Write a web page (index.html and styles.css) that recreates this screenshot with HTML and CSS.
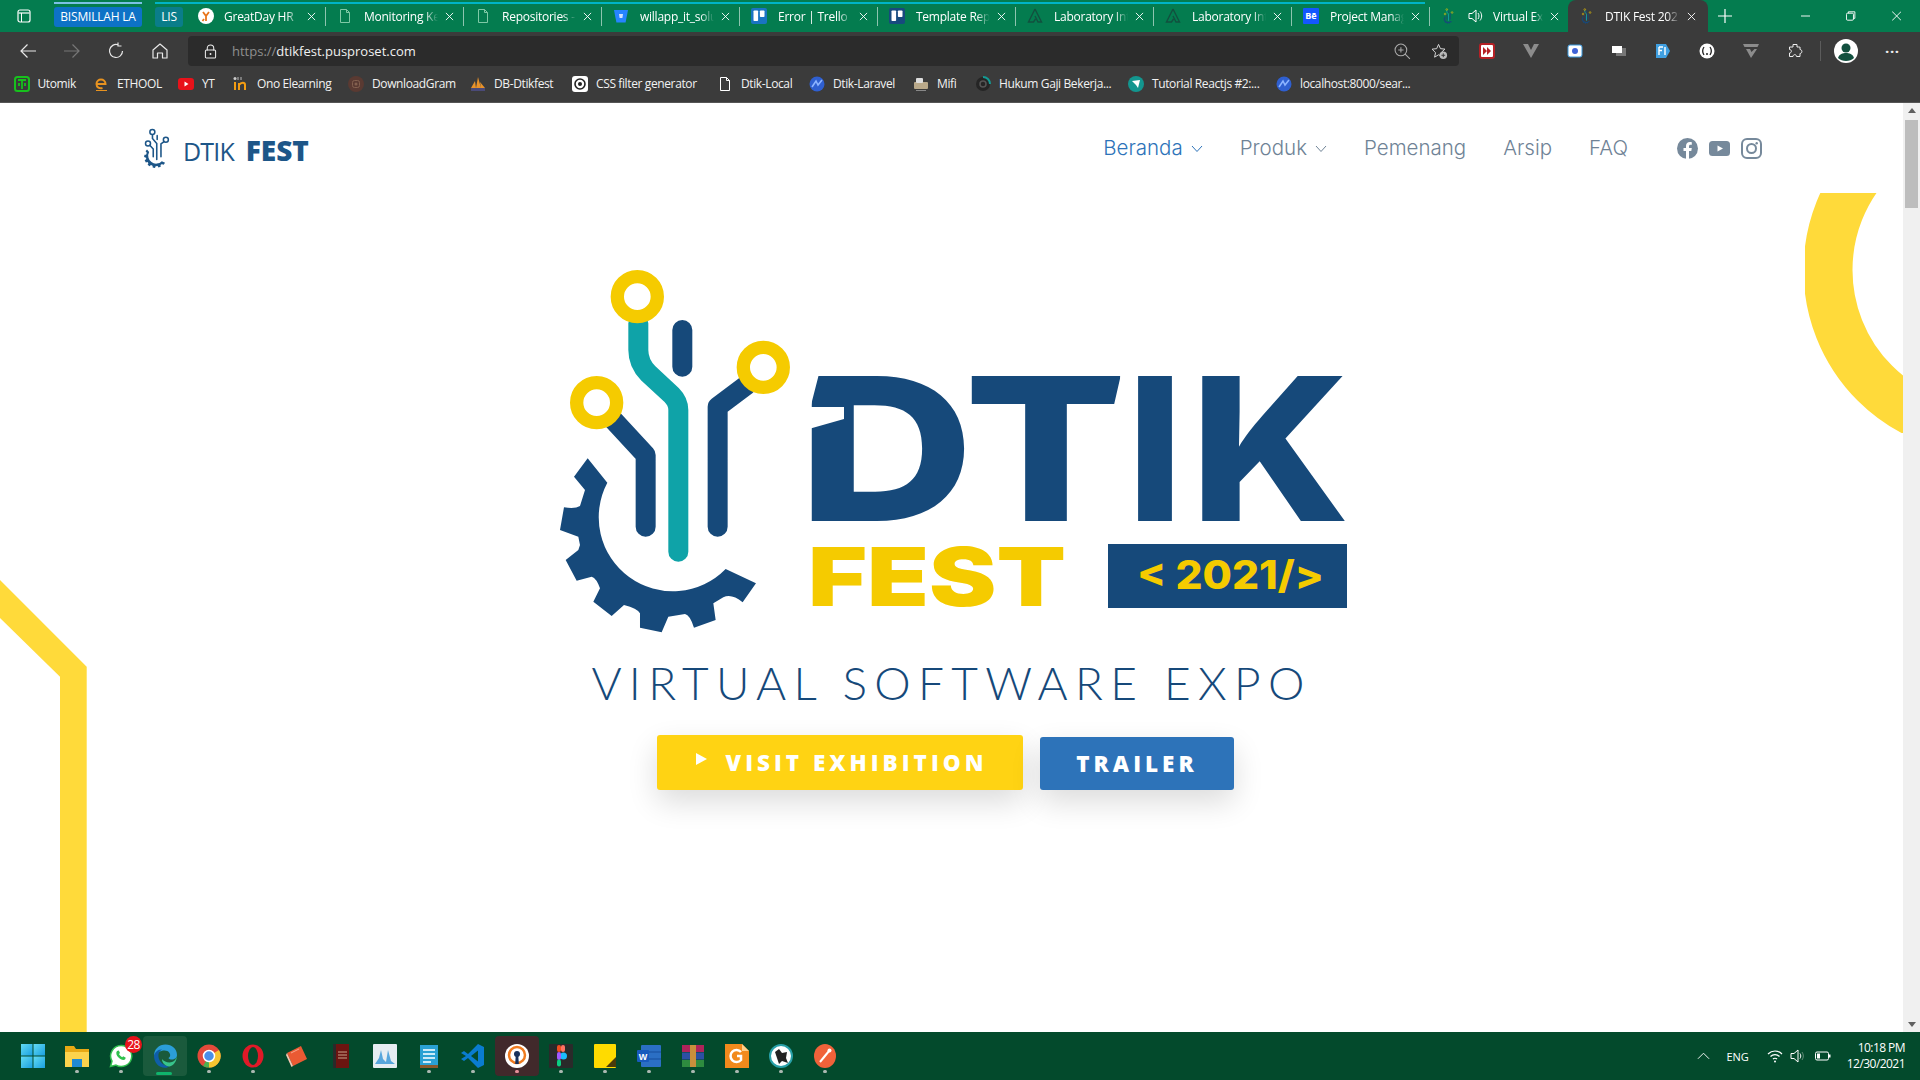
FILE: index.html
```html
<!DOCTYPE html>
<html lang="en">
<head>
<meta charset="utf-8">
<title>DTIK Fest 2021</title>
<link rel="stylesheet" href="styles.css">
</head>
<body>
<svg class="defs" aria-hidden="true">
  <defs>
    <path id="gear" d="M113 595L172 668A222 222 0 0 0 527 927L618 970L578 1027Q545 1000 520 1012L490 1030L497 1080L432 1103Q420 1065 405 1062L355 1070L335 1117L270 1103L270 1060Q262 1045 222 1035L185 1068L130 1025L150 985Q140 955 125 950L80 962L47 900L85 870L90 855L85 830L30 810L42 742Q75 748 90 738L105 690L72 650Z"/>
    <symbol id="doc" viewBox="0 0 16 16"><path d="M3.5 1.5h6l3 3v10h-9z M9.5 1.5v3h3" fill="none" stroke="currentColor" stroke-width="1"/></symbol>
    <symbol id="lab" viewBox="0 0 16 16"><path d="M8 1L14.5 14H11L8 8M8 1L1.5 14H6.5L8.5 11" fill="none" stroke="#12503f" stroke-width="1.4"/></symbol>
    <symbol id="trello" viewBox="0 0 16 16"><rect width="16" height="16" rx="2" fill="currentColor"/><rect x="2.5" y="2.5" width="4.6" height="10.5" rx=".8" fill="#fff"/><rect x="8.9" y="2.5" width="4.6" height="6.5" rx=".8" fill="#fff"/></symbol>
    <symbol id="close" viewBox="0 0 10 10"><path d="M1 1L9 9M9 1L1 9" stroke="currentColor" stroke-width="1" fill="none"/></symbol>
    <symbol id="blueball" viewBox="0 0 16 16"><circle cx="8" cy="8" r="7.5" fill="#2f5fd0"/><path d="M3 11L7 5L9 9L13 4" stroke="#8db4ff" stroke-width="1.6" fill="none"/></symbol>
    <symbol id="miniicon" viewBox="0 0 840 1140">
      <path d="M265 190V290L385 430V875" fill="none" stroke="#0fa3a8" stroke-width="60" stroke-linecap="round"/>
      <path d="M397 210V320M190 480L287 585V800M590 375L503 440V800" fill="none" stroke="#16497a" stroke-width="60" stroke-linecap="round"/>
      <circle cx="262" cy="110" r="60" fill="none" stroke="#f5cb00" stroke-width="40"/><circle cx="640" cy="322" r="60" fill="none" stroke="#f5cb00" stroke-width="40"/><circle cx="140" cy="428" r="60" fill="none" stroke="#f5cb00" stroke-width="40"/>
      <use href="#gear" fill="#16497a"/>
    </symbol>
  </defs>
</svg>

<header class="titlebar">
  <div class="winbtn"><svg class="ic14" viewBox="0 0 14 14"><rect x="1" y="1" width="12" height="12" rx="2" fill="none" stroke="#fff" stroke-width="1.2"/><path d="M1.5 4h11" stroke="#fff" stroke-width="1.2"/><path d="M4.5 4v9" stroke="#fff" stroke-width="1"/></svg></div>
  <div class="chip chip-blue">BISMILLAH LA</div>
  <div class="chip chip-teal">LIS</div>
  <div class="tabs">
    <div class="tab"><svg class="favicon" viewBox="0 0 16 16"><circle cx="8" cy="8" r="8" fill="#fff"/><path d="M5 4l3 4 3-4M8 8v5M6 11l-1.5 2" stroke="#e8741a" stroke-width="1.8" fill="none"/></svg><span class="tab-title">GreatDay HR</span><svg class="x"><use href="#close"/></svg></div>
    <div class="tab"><svg class="favicon doc-ic"><use href="#doc"/></svg><span class="tab-title">Monitoring Kehadiran</span><svg class="x"><use href="#close"/></svg></div>
    <div class="tab"><svg class="favicon doc-ic"><use href="#doc"/></svg><span class="tab-title">Repositories - Bitbucket</span><svg class="x"><use href="#close"/></svg></div>
    <div class="tab"><svg class="favicon" viewBox="0 0 16 16"><path d="M1 2h14l-2.4 12.5H3.4z" fill="#2684ff"/><path d="M6 6h4l-.6 4H6.6z" fill="#cfe2ff"/></svg><span class="tab-title">willapp_it_solution</span><svg class="x"><use href="#close"/></svg></div>
    <div class="tab"><svg class="favicon trello-a"><use href="#trello"/></svg><span class="tab-title">Error | Trello</span><svg class="x"><use href="#close"/></svg></div>
    <div class="tab"><svg class="favicon trello-b"><use href="#trello"/></svg><span class="tab-title">Template Repository</span><svg class="x"><use href="#close"/></svg></div>
    <div class="tab"><svg class="favicon"><use href="#lab"/></svg><span class="tab-title">Laboratory Integrated</span><svg class="x"><use href="#close"/></svg></div>
    <div class="tab"><svg class="favicon"><use href="#lab"/></svg><span class="tab-title">Laboratory Integrated</span><svg class="x"><use href="#close"/></svg></div>
    <div class="tab"><span class="be">Bē</span><span class="tab-title">Project Management</span><svg class="x"><use href="#close"/></svg></div>
    <div class="tab tab-audio"><svg class="favicon"><use href="#miniicon"/></svg><svg class="speaker" viewBox="0 0 16 16"><path d="M2 5.5h3L9 2v12L5 10.5H2z M11 5c1.300 1.800 1.300 4.200 0 6 M13 3.500c2.200 2.700 2.200 6.300 0 9" fill="none" stroke="#fff" stroke-width="1"/></svg><span class="tab-title">Virtual Expo</span><svg class="x"><use href="#close"/></svg></div>
    <div class="tab tab-active"><svg class="favicon"><use href="#miniicon"/></svg><span class="tab-title">DTIK Fest 2021</span><svg class="x"><use href="#close"/></svg></div>
  </div>
  <svg class="plus" viewBox="0 0 16 16"><path d="M8 1v14M1 8h14" stroke="#fff" stroke-width="1.200"/></svg>
  <div class="wincontrols">
    <svg class="ic10" viewBox="0 0 10 10"><path d="M0 5h10" stroke="#fff"/></svg>
    <svg class="ic10" viewBox="0 0 10 10"><rect x=".5" y="2" width="7.500" height="7.500" rx="1.200" fill="none" stroke="#fff"/><path d="M2.500 2V.5H9.500V7.500H8" fill="none" stroke="#fff"/></svg>
    <svg class="ic10" viewBox="0 0 10 10"><path d="M0 0L10 10M10 0L0 10" stroke="#fff"/></svg>
  </div>
  <span class="groupline groupline-blue"></span>
  <span class="groupline groupline-teal"></span>
</header>

<div class="toolbar">
  <div class="navbtns">
    <svg class="tb" viewBox="0 0 18 18"><path d="M17 9H2M8.500 2.500L2 9l6.500 6.500" fill="none" stroke="#e8e8e8" stroke-width="1.200"/></svg>
    <svg class="tb" viewBox="0 0 18 18"><path d="M1 9h15M9.500 2.500L16 9l-6.500 6.500" fill="none" stroke="#777" stroke-width="1.200"/></svg>
    <svg class="tb" viewBox="0 0 18 18"><path d="M15.500 9A6.500 6.500 0 1 1 11 2.800M11 .5V4H14.500" fill="none" stroke="#e8e8e8" stroke-width="1.200"/></svg>
    <svg class="tb" viewBox="0 0 18 18"><path d="M2 8L9 2l7 6v8h-4.500v-5h-5v5H2z" fill="none" stroke="#e8e8e8" stroke-width="1.200" stroke-linejoin="round"/></svg>
  </div>
  <div class="omnibox">
    <svg class="lock" viewBox="0 0 14 16"><path d="M3.500 7V4.500a3.500 3.500 0 0 1 7 0V7" fill="none" stroke="#eee" stroke-width="1.100"/><rect x="1.500" y="6.500" width="11" height="8.500" rx="1.200" fill="none" stroke="#eee" stroke-width="1.100"/><circle cx="7" cy="10.700" r="1" fill="#eee"/></svg>
    <span class="url"><span class="url-dim">https://</span>dtikfest.pusproset.com</span>
    <svg class="omni-ic zoomic" viewBox="0 0 16 16"><circle cx="6.500" cy="6.500" r="5.500" fill="none" stroke="#aaa"/><path d="M10.500 10.500L15 15M4 6.500h5M6.500 4v5" stroke="#aaa" fill="none"/></svg>
    <svg class="omni-ic" viewBox="0 0 18 18"><path d="M8 1.500l2 4.500 4.800.5-3.600 3.200 1 4.700L8 12.500 3.800 15l1-4.700L1.200 6.500 6 6z" fill="none" stroke="#ddd"/><circle cx="13" cy="13" r="4" fill="#bbb"/><path d="M11 13h4M13 11v4" stroke="#333"/></svg>
  </div>
  <div class="exts">
    <svg class="ext" viewBox="0 0 16 16"><rect x="1" y="1" width="14" height="14" rx="2" fill="#fff" stroke="#b52025" stroke-width="2"/><path d="M4 4l4 4-4 4zM8 4l4 4-4 4z" fill="#b52025"/></svg>
    <svg class="ext" viewBox="0 0 16 16"><path d="M0 1h5l3 6 3-6h5L8 15z" fill="#8c8c8c"/></svg>
    <svg class="ext" viewBox="0 0 16 16"><rect x="1" y="2" width="14" height="12" rx="2" fill="#fff" stroke="#3a9ae0"/><circle cx="8" cy="8" r="3" fill="#3f63d8"/></svg>
    <svg class="ext" viewBox="0 0 16 16"><rect x="5" y="5" width="10" height="8" fill="#777"/><rect x="1" y="3" width="10" height="7" fill="#fff"/></svg>
    <svg class="ext" viewBox="0 0 16 16"><path d="M1 1h10l4 7-4 7H1z" fill="#3f9fe0"/><path d="M4 4h4M4 4v8M4 7.500h3M10 4v8" stroke="#fff" stroke-width="1.400"/></svg>
    <svg class="ext" viewBox="0 0 16 16"><circle cx="8" cy="8" r="7.500" fill="#fff"/><path d="M5 4c-2 3-2 5 0 8M11 4c2 3 2 5 0 8" stroke="#222" stroke-width="1.300" fill="none"/><circle cx="8" cy="11" r="1" fill="#222"/></svg>
    <svg class="ext" viewBox="0 0 16 16"><path d="M0 1h16l-1.500 3H1.500zM3 6h4l1.500 3 3-3H14L8 15z" fill="#8c8c8c"/></svg>
    <svg class="ext" viewBox="0 0 16 16"><path d="M6 1.500h4v2.500c2 0 3 0 3 0v2.500c2.500 0 2.500 4 0 4v3H9.500c0-2.500-3.500-2.500-3.500 0H2.500v-3.500c2.500 0 2.500-3.500 0-3.500V4H6z" fill="none" stroke="#eee" stroke-linejoin="round"/></svg>
    <span class="tb-sep"></span>
    <svg class="avatar" viewBox="0 0 24 24"><circle cx="12" cy="12" r="12" fill="#fff"/><circle cx="12" cy="9" r="4.500" fill="#12503f"/><path d="M4 19c1-4 5-5 8-5s7 1 8 5c-4 4-12 4-16 0z" fill="#12503f"/></svg>
    <span class="dots">···</span>
  </div>
</div>

<nav class="bookmarks">
  <div class="bm"><svg class="bmi" viewBox="0 0 16 16"><rect x="1" y="1" width="14" height="14" rx="2.500" fill="none" stroke="#17c11d" stroke-width="2"/><path d="M4 4h8M8 4v9M5 7v3M11 7v3" stroke="#17c11d" stroke-width="1.800"/></svg>Utomik</div>
  <div class="bm"><svg class="bmi" viewBox="0 0 16 16"><path d="M3.500 8h9c0-6-9-6-9 0 0 3.500 3 5 6 4" fill="none" stroke="#e89320" stroke-width="2"/><path d="M3 14.500h11" stroke="#e89320"/></svg>ETHOOL</div>
  <div class="bm"><svg class="bmi" viewBox="0 0 16 16"><rect y="2" width="16" height="12" rx="3" fill="#e8121a"/><path d="M6.500 5.500l4 2.500-4 2.500z" fill="#fff"/></svg>YT</div>
  <div class="bm"><svg class="bmi" viewBox="0 0 16 16"><path d="M2 6v8M6 14V7M6 9c2-3 6-3 6 0v5" fill="none" stroke="#f39c12" stroke-width="2"/><circle cx="2" cy="2.500" r="1.500" fill="#ccc"/><path d="M5 1v3M8 1v3" stroke="#bbb"/></svg>Ono Elearning</div>
  <div class="bm"><svg class="bmi" viewBox="0 0 16 16"><circle cx="8" cy="8" r="8" fill="#5a3a32"/><rect x="4.500" y="4.500" width="7" height="7" rx="2" fill="none" stroke="#83604f"/><circle cx="8" cy="8" r="1.500" fill="#83604f"/></svg>DownloadGram</div>
  <div class="bm"><svg class="bmi" viewBox="0 0 16 16"><path d="M1 12L5 5l1 7zM6 12L8 1l3 11zM11 12l-1-6 5 6z" fill="#e8922a"/><path d="M1 12h14v3H1z" fill="#4a4a78"/></svg>DB-Dtikfest</div>
  <div class="bm"><svg class="bmi" viewBox="0 0 16 16"><rect width="16" height="16" rx="3" fill="#fff"/><circle cx="8" cy="8" r="5" fill="none" stroke="#222" stroke-width="1.600"/><circle cx="8" cy="8" r="2" fill="#222"/></svg>CSS filter generator</div>
  <div class="bm"><svg class="bmi doc-w"><use href="#doc"/></svg>Dtik-Local</div>
  <div class="bm"><svg class="bmi"><use href="#blueball"/></svg>Dtik-Laravel</div>
  <div class="bm"><svg class="bmi" viewBox="0 0 16 16"><rect x="1" y="6" width="14" height="7" rx="1" fill="#b9a98a"/><rect x="3" y="2" width="7" height="5" rx="1" fill="#ddd"/><path d="M3 14.500h10" stroke="#888"/></svg>Mifi</div>
  <div class="bm"><svg class="bmi" viewBox="0 0 16 16"><circle cx="8" cy="8" r="7" fill="#252525"/><path d="M8 1a7 7 0 0 1 7 7" stroke="#139a94" stroke-width="2" fill="none"/><circle cx="8" cy="8" r="3" fill="none" stroke="#555" stroke-width="1.500"/></svg>Hukum Gaji Bekerja...</div>
  <div class="bm"><svg class="bmi" viewBox="0 0 16 16"><circle cx="8" cy="8" r="8" fill="#13968f"/><path d="M4 5l8-1-2 8-2-3z" fill="#fff"/></svg>Tutorial Reactjs #2:...</div>
  <div class="bm"><svg class="bmi"><use href="#blueball"/></svg>localhost:8000/sear...</div>
</nav>

<div class="viewport">
  <main class="page">
    <svg class="deco deco-left" viewBox="0 0 87 452"><path d="M0 0L86.700 86.700V452H60V96.700L0 38z" fill="#ffda3a"/></svg>
    <svg class="deco deco-right" viewBox="0 0 98 240"><circle cx="183" cy="77" r="160" fill="none" stroke="#ffda3a" stroke-width="49"/></svg>

    <div class="site-nav">
      <a class="brand">
        <svg class="brand-ic" viewBox="0 0 840 1140">
          <path d="M265 190V290L385 430V875M397 210V320M190 480L287 585V800M590 375L503 440V800" fill="none" stroke="#1d5688" stroke-width="44" stroke-linecap="round"/>
          <circle cx="262" cy="110" r="70" fill="none" stroke="#1d5688" stroke-width="42"/><circle cx="640" cy="322" r="70" fill="none" stroke="#1d5688" stroke-width="42"/><circle cx="140" cy="428" r="70" fill="none" stroke="#1d5688" stroke-width="42"/>
          <use href="#gear" fill="#1d5688"/>
        </svg>
        <span class="brand-name">DTIK <b>FEST</b></span>
      </a>
      <div class="nav-links">
        <a class="nav-link is-current">Beranda<svg class="chev" viewBox="0 0 12 8"><path d="M1 1l5 5.500L11 1" fill="none" stroke="currentColor"/></svg></a>
        <a class="nav-link">Produk<svg class="chev" viewBox="0 0 12 8"><path d="M1 1l5 5.500L11 1" fill="none" stroke="currentColor"/></svg></a>
        <a class="nav-link">Pemenang</a>
        <a class="nav-link">Arsip</a>
        <a class="nav-link">FAQ</a>
        <div class="socials">
          <svg class="soc" viewBox="0 0 21 21"><circle cx="10.500" cy="10.500" r="10.500" fill="#76899b"/><path d="M9 21v-8H6.500v-3H9V8c0-2.700 1.600-4 3.800-4 1 0 2 .2 2 .2v2.500h-1.200c-1.200 0-1.600.7-1.600 1.500V10h2.800l-.5 3H12v8z" fill="#fff"/></svg>
          <svg class="soc" viewBox="0 0 21 21"><rect y="3" width="21" height="15" rx="3.500" fill="#76899b"/><path d="M8.500 7.500l5.500 3-5.500 3z" fill="#fff"/></svg>
          <svg class="soc" viewBox="0 0 21 21"><rect x="1" y="1" width="19" height="19" rx="5" fill="none" stroke="#76899b" stroke-width="2"/><circle cx="10.500" cy="10.500" r="4.500" fill="none" stroke="#76899b" stroke-width="2"/><circle cx="15.700" cy="5.300" r="1.200" fill="#76899b"/></svg>
        </div>
      </div>
    </div>

    <section class="hero">
      <svg class="hero-logo" viewBox="550 260 803 380">
        <g transform="translate(550 260) scale(.3333)">
          <path d="M265 190V270Q265 310 295 340L365 405Q385 425 385 450V875" fill="none" stroke="#0fa3a8" stroke-width="60" stroke-linecap="round" stroke-linejoin="round"/>
          <path d="M397 210V320M190 480L287 585V800M590 375L503 440V800" fill="none" stroke="#16497a" stroke-width="60" stroke-linecap="round" stroke-linejoin="round"/>
          <circle cx="262" cy="110" r="60" fill="#fff" stroke="#f5cb00" stroke-width="40"/>
          <circle cx="640" cy="322" r="60" fill="#fff" stroke="#f5cb00" stroke-width="40"/>
          <circle cx="140" cy="428" r="60" fill="#fff" stroke="#f5cb00" stroke-width="40"/>
          <use href="#gear" fill="#16497a"/>
        </g>
        <text class="lg-big" x="798" y="521" textLength="176" lengthAdjust="spacingAndGlyphs">D</text>
        <text class="lg-big" x="964" y="521" textLength="164" lengthAdjust="spacingAndGlyphs">T</text>
        <text class="lg-big" x="1127" y="521" textLength="56" lengthAdjust="spacingAndGlyphs">I</text>
        <text class="lg-big" x="1190" y="521" textLength="160" lengthAdjust="spacingAndGlyphs">K</text>
        <path class="lg-cut" d="M800 370H820L810.500 407H800zM800 407H844V419L810.500 428.500H800zM1122 370H1135V407H1113.500z"/>
        <text class="lg-fest" x="808" y="606" textLength="258" lengthAdjust="spacingAndGlyphs">FEST</text>
        <rect x="1108" y="544" width="239" height="64" fill="#16497a"/>
        <text class="lg-year" x="1137" y="589" textLength="187" lengthAdjust="spacingAndGlyphs">&lt; 2021/&gt;</text>
      </svg>
      <h1 class="expo">VIRTUAL SOFTWARE EXPO</h1>
      <div class="cta">
        <a class="btn btn-yellow"><svg class="play" viewBox="0 0 11 12"><path d="M0 0l11 6-11 6z" fill="#fff"/></svg>VISIT EXHIBITION</a>
        <a class="btn btn-blue">TRAILER</a>
      </div>
    </section>
  </main>
  <aside class="scrollbar">
    <span class="arrow arrow-up"></span>
    <span class="thumb"></span>
    <span class="arrow arrow-down"></span>
  </aside>
</div>

<footer class="taskbar">
  <div class="task-icons">
    <div class="task"><svg class="ti" viewBox="0 0 24 24"><defs><linearGradient id="w" x1="0" y1="0" x2="1" y2="1"><stop offset="0" stop-color="#62dcf2"/><stop offset="1" stop-color="#1a9fe0"/></linearGradient></defs><rect width="11.500" height="11.500" fill="url(#w)"/><rect x="12.500" width="11.500" height="11.500" fill="url(#w)"/><rect y="12.500" width="11.500" height="11.500" fill="url(#w)"/><rect x="12.500" y="12.500" width="11.500" height="11.500" fill="url(#w)"/></svg></div>
    <div class="task run"><svg class="ti" viewBox="0 0 24 24"><path d="M0 2h9l2 3h13v18H0z" fill="#e8a915"/><path d="M0 8h24v15H0z" fill="#fcd34d"/><rect x="7" y="15" width="10" height="8" fill="#1f8ad4"/></svg></div>
    <div class="task run"><svg class="ti" viewBox="0 0 24 24"><path d="M12 1.500a10.500 10.500 0 0 0-9 15.700L1.500 22.500l5.500-1.400A10.500 10.500 0 1 0 12 1.500z" fill="#fff" stroke="#30c04e" stroke-width="1.500"/><path d="M8 7c-1.500 2-.5 4.500 1.500 6.500S14 16.500 16 15.500l.8-1.800-2.600-1.400-1 1c-1.500-.7-2.500-1.800-3.200-3.200l1-1L9.800 6.500z" fill="#30c04e"/></svg><span class="badge">28</span></div>
    <div class="task active"><svg class="ti" viewBox="0 0 24 24"><path d="M1 12C1 5 6 .5 12.500.5 19 .5 24 5 24 11c0 3-2.500 4.500-5 4.500-2 0-3.500-.7-3.500-1.500 2-1 2-3.500 1-5-1.500-2.500-5-3-8-2C5 8 3 9.500 1 12z" fill="#2b9ed8"/><path d="M1 12c0-3 4-7 8-6.500C6 7 5 10 5.500 13c.6 5 5.500 9 11 9.500-2 1-3 1.200-4.500 1.200C5.500 23.700 1 18.500 1 12z" fill="#0f5ea8"/><path d="M24 11c0 6-3.500 11-7.500 11.500C12 22 9 19 9 15c2 3 7 4 10 3 3-1 5-4 5-7z" fill="#38c48c"/></svg></div>
    <div class="task run"><svg class="ti" viewBox="0 0 24 24"><circle cx="12" cy="12" r="11.500" fill="#e34a3a"/><path d="M12 12L22 17A11.500 11.500 0 0 1 6 22z" fill="#4caf50"/><path d="M12 12L22 6A11.500 11.500 0 0 1 12 23.500z" fill="#f7c531"/><circle cx="12" cy="12" r="5.500" fill="#4a8fe8" stroke="#fff" stroke-width="1.500"/></svg></div>
    <div class="task run"><svg class="ti" viewBox="0 0 24 24"><ellipse cx="12" cy="12" rx="10.500" ry="11.500" fill="#e01a28"/><ellipse cx="12" cy="12" rx="5" ry="9" fill="#044a2c"/></svg></div>
    <div class="task"><svg class="ti" viewBox="0 0 24 24"><path d="M2 9L16 2l6 13-14 7z" fill="#ea5a33"/><path d="M2 9l6 13-1.500 1L1 11z" fill="#f7c7b3"/><path d="M6 9l8-4" stroke="#f9a58b"/></svg></div>
    <div class="task"><svg class="ti" viewBox="0 0 24 24"><rect x="4" width="16" height="24" fill="#6b1410"/><rect x="4" width="3" height="24" fill="#2a2a2a"/><path d="M9 8h9M9 11h9M9 14h9" stroke="#c9a48a"/></svg></div>
    <div class="task"><svg class="ti" viewBox="0 0 24 24"><rect width="24" height="24" rx="1" fill="#e6edf2"/><path d="M2 20L6 14l2-8 2 9 3 3 2-12 3 11 4 3z" fill="#57a6dc"/></svg></div>
    <div class="task run"><svg class="ti" viewBox="0 0 24 24"><rect x="3" y="1" width="18" height="22" fill="#2aa1d3"/><path d="M3 21h18v3H3z" fill="#8a5a2b"/><path d="M6 6h12M6 10h12M6 14h12M6 18h8" stroke="#cbeaf7" stroke-width="1.800"/></svg></div>
    <div class="task run"><svg class="ti" viewBox="0 0 24 24"><path d="M17 0l6 3v18l-6 3L7 14l-4 3-3-2 5-3-5-3 3-2 4 3z" fill="#0a7cd0"/><path d="M17 6.500v11L10 12z" fill="#044a2c"/></svg></div>
    <div class="task vpn"><svg class="ti" viewBox="0 0 24 24"><circle cx="12" cy="12" r="12" fill="#fff"/><circle cx="12" cy="11" r="8" fill="none" stroke="#ef7b20" stroke-width="2.500"/><circle cx="12" cy="10" r="3" fill="#17315c"/><path d="M10.800 10h2.400l.6 10h-3.600z" fill="#17315c"/></svg></div>
    <div class="task run"><svg class="ti" viewBox="0 0 24 24"><rect width="24" height="24" rx="1" fill="#2a2a2a"/><circle cx="14.500" cy="12" r="3.500" fill="#19bcfe"/><rect x="8" y="1" width="4" height="7" rx="2" fill="#f24e1e"/><rect x="12" y="1" width="4" height="7" rx="2" fill="#ff7262"/><rect x="8" y="8" width="4" height="8" rx="2" fill="#a259ff"/><rect x="8" y="15.500" width="4" height="7" rx="2" fill="#0acf83"/></svg></div>
    <div class="task run"><svg class="ti" viewBox="0 0 24 24"><rect x="1" width="22" height="24" rx="1" fill="#ffdb00"/><path d="M13 23l10-10v10z" fill="#4a3b0a"/></svg></div>
    <div class="task run"><svg class="ti" viewBox="0 0 24 24"><rect x="4" y="1" width="20" height="22" rx="1" fill="#2b6fc4"/><path d="M4 8h20M4 15h20" stroke="#174f9c"/><rect y="6" width="12" height="12" rx="1" fill="#185abd"/><text class="word-w" x="6" y="15.500">W</text></svg></div>
    <div class="task run"><svg class="ti" viewBox="0 0 24 24"><rect x="1" y="1" width="22" height="7" fill="#b0245a"/><rect x="1" y="8.500" width="22" height="7" fill="#2c4fa3"/><rect x="1" y="16" width="22" height="7" fill="#2e8b3f"/><rect x="9" y="1" width="6" height="22" fill="#c98f3c"/></svg></div>
    <div class="task run"><svg class="ti" viewBox="0 0 24 24"><path d="M0 0h17l7 7v17H0z" fill="#f28a1c"/><path d="M17 0l7 7h-7z" fill="#ffd08a"/><path d="M16 8a6 6 0 1 0 0 8v-4h-4" fill="none" stroke="#fff" stroke-width="2.500"/></svg></div>
    <div class="task run"><svg class="ti" viewBox="0 0 24 24"><circle cx="12" cy="12" r="11" fill="#fff" stroke="#28a0a8" stroke-width="2"/><path d="M6 8l4-3 3 4 5-1-1 6 2 5-6-2-3 3-2-6z" fill="#222"/></svg></div>
    <div class="task run"><svg class="ti" viewBox="0 0 24 24"><ellipse cx="12" cy="12" rx="11" ry="12" fill="#f0623a"/><path d="M7 18l9-11" stroke="#fff" stroke-width="2"/><circle cx="16.500" cy="6.500" r="2" fill="#fff"/></svg></div>
  </div>
  <div class="tray">
    <svg class="chevup" viewBox="0 0 14 8"><path d="M1 7l6-6 6 6" fill="none" stroke="#fff" stroke-width="1"/></svg>
    <span class="lang">ENG</span>
    <svg class="tray-ic" viewBox="0 0 16 16"><path d="M1 6c4-4 10-4 14 0M3.500 8.500c2.500-2.500 6.500-2.500 9 0M6 11c1-1 3-1 4 0" fill="none" stroke="#fff" stroke-width="1.200"/><circle cx="8" cy="13.500" r="1" fill="#fff"/></svg>
    <svg class="tray-ic tray-sound" viewBox="0 0 16 16"><path d="M1 5.500h3L8 2v12L4 10.500H1z" fill="none" stroke="#fff"/><path d="M10 5.500c1 1.500 1 3.500 0 5" fill="none" stroke="#fff"/><path d="M12 4c1.800 2.500 1.800 5.500 0 8" fill="none" stroke="#5f8a76"/></svg>
    <svg class="tray-ic" viewBox="0 0 16 16"><rect x=".5" y="4" width="13" height="8" rx="1.500" fill="none" stroke="#fff"/><rect x="2" y="5.500" width="3" height="5" fill="#fff"/><rect x="14" y="6.500" width="1.500" height="3" fill="#fff"/></svg>
    <div class="clock"><span>10:18 PM</span><span>12/30/2021</span></div>
  </div>
</footer>
</body>
</html>
```
FILE: styles.css
```css
* { box-sizing: border-box; }
html, body { margin: 0; height: 100%; overflow: hidden; }
body { display: flex; flex-direction: column; height: 1080px; font-family: "Open Sans", "Liberation Sans", sans-serif; background: #fff; }
.defs { position: absolute; width: 0; height: 0; }

/* title bar */
.titlebar { position: relative; flex: none; height: 32px; background: #047c4f; display: flex; align-items: center; color: #fff; font-size: 12px; }
.winbtn { width: 54px; padding-left: 17px; display: flex; }
.ic14 { width: 14px; height: 14px; }
.chip { height: 20px; border-radius: 3px; display: flex; align-items: center; justify-content: center; letter-spacing: -.2px; margin-top: 1px; }
.chip-blue { width: 88px; background: #0d72c6; }
.chip-teal { width: 28px; margin-left: 13px; margin-right: 5px; background: #0a7d8a; }
.groupline { position: absolute; top: 2px; height: 2px; }
.groupline-blue { left: 54px; width: 88px; background: #7cc0e6; }
.groupline-teal { left: 155px; width: 1270px; background: #00b4c6; }
.tabs { display: flex; height: 32px; align-items: center; }
.tab { position: relative; width: 138px; height: 19px; display: flex; align-items: center; padding-left: 11px; padding-right: 9px; border-right: 1px solid rgba(255,255,255,.55); letter-spacing: -.25px; color: #fff; }
.favicon { flex: none; width: 16px; height: 16px; margin-right: 11px; }
.tab:first-child { padding-left: 10px; }
.tab:first-child .favicon { margin-right: 10px; }
.doc-ic { color: #7fc9a6; }
.trello-a { color: #1a74c2; }
.trello-b { color: #174a7e; }
.be { flex: none; width: 16px; height: 16px; margin-right: 11px; background: #1457ff; color: #fff; font-size: 9px; font-weight: 700; line-height: 16px; text-align: center; border-radius: 1px; letter-spacing: 0; }
.speaker { flex: none; width: 16px; height: 16px; margin: 0 10px 0 0; }
.tab-title { flex: 1; min-width: 0; white-space: nowrap; overflow: hidden; -webkit-mask-image: linear-gradient(90deg, #000 82%, transparent); mask-image: linear-gradient(90deg, #000 82%, transparent); }
.x { flex: none; width: 9px; height: 9px; margin-left: 7px; color: #fff; }
.tab:nth-child(10) { border-right: 0; }
.tab-audio .favicon { margin-right: 10px; }
.tab-active { width: 140px; height: 32px; padding-left: 11px; padding-right: 12px; background: #3b3b3b; border: 0; border-radius: 8px 8px 0 0; }
.tab-active .favicon { margin-right: 10px; }
.plus { width: 16px; height: 16px; margin-left: 9px; }
.wincontrols { margin-left: 68px; display: flex; gap: 36px; width: 100px; }
.ic10 { width: 10px; height: 10px; }

/* toolbar */
.toolbar { flex: none; height: 34px; background: #3b3b3b; display: flex; align-items: flex-end; }
.navbtns { width: 188px; height: 30px; display: flex; align-items: center; gap: 26px; padding-left: 19px; }
.tb { width: 18px; height: 18px; }
.omnibox { width: 1271px; height: 30px; background: #2b2b2b; border-radius: 4px; display: flex; align-items: center; padding-left: 16px; }
.lock { width: 13px; height: 15px; }
.url { margin-left: 15px; color: #f0f0f0; font-size: 13px; }
.url-dim { color: #8f8f8f; }
.omni-ic { width: 17px; height: 17px; }
.zoomic { margin-left: auto; margin-right: 20px; }
.omnibox .omni-ic:last-child { margin-right: 11px; }
.exts { flex: 1; height: 30px; display: flex; align-items: center; padding-left: 20px; gap: 28px; }
.ext { flex: none; width: 16px; height: 16px; }
.tb-sep { flex: none; width: 1px; height: 20px; background: #5c5c5c; margin-left: -11px; margin-right: -15px; }
.avatar { flex: none; width: 24px; height: 24px; margin-right: -1px; }
.dots { color: #eee; font-size: 15px; font-weight: 700; letter-spacing: .6px; }

/* bookmarks */
.bookmarks { flex: none; height: 37px; background: #3b3b3b; border-bottom: 1px solid #555; display: grid; grid-template-columns: 79.5px 85px 55px 115px 122px 102px 145px 92px 104px 62px 153px 148px 130px; padding-left: 13.5px; padding-bottom: 1px; align-items: center; color: #f2f2f2; font-size: 12px; letter-spacing: -.38px; }
.bm { display: flex; align-items: center; white-space: nowrap; }
.bmi { flex: none; width: 16px; height: 16px; margin-right: 8px; }
.doc-w { color: #fff; }

/* page */
.viewport { flex: 1; min-height: 0; display: flex; }
.page { position: relative; flex: 1; min-width: 0; background: #fff; overflow: hidden; }
.deco { position: absolute; }
.deco-left { left: 0; top: 477px; width: 87px; height: 452px; }
.deco-right { right: 0; top: 90px; width: 98px; height: 240px; }

.site-nav { position: relative; height: 90px; display: flex; justify-content: space-between; align-items: center; padding: 0 141px 0 143px; }
.brand { display: flex; align-items: center; gap: 10px; }
.brand-ic { width: 30px; height: 43px; }
.brand-name { color: #1d5688; font-size: 25px; font-weight: 400; letter-spacing: -.8px; white-space: pre; word-spacing: 6px; margin-top: 4px; }
.brand-name b { font-weight: 800; font-size: 28px; letter-spacing: 0; }
.nav-links { display: flex; align-items: center; gap: 37px; }
.nav-link { display: flex; align-items: center; color: #6f8396; font-family: "Inter", sans-serif; font-weight: 300; font-size: 20.5px; margin-top: -1px; }
.nav-link.is-current { color: #2d73b9; }
.chev { width: 12px; height: 8px; margin-left: 8px; margin-top: 3px; }
.socials { display: flex; align-items: center; gap: 11px; margin-left: 12px; }
.soc { width: 21px; height: 21px; }

.hero { position: relative; display: flex; flex-direction: column; align-items: center; padding-top: 67px; }
.hero-logo { width: 803px; height: 380px; display: block; }
.lg-big { font-family: "Inter", sans-serif; font-weight: 800; font-size: 199px; fill: #16497a; }
.lg-cut { fill: #fff; }
.lg-fest { font-family: "Inter", sans-serif; font-weight: 900; font-size: 81px; fill: #f5cb00; }
.lg-year { font-family: "Inter", sans-serif; font-weight: 800; font-size: 39px; fill: #f5cb00; }
.expo { margin: 15px 0 0; color: #16497a; font-family: "Lato", sans-serif; font-weight: 300; font-size: 46px; line-height: 56px; letter-spacing: 7.300px; white-space: nowrap; }
.cta { margin-top: 24px; padding-right: 12px; display: flex; align-items: flex-end; gap: 17px; }
.btn { display: flex; align-items: center; justify-content: center; color: #fff; font-weight: 800; font-size: 22.500px; letter-spacing: 4px; border-radius: 3px; box-shadow: 0 12px 30px rgba(0,0,0,.14); }
.btn-yellow { width: 366px; height: 55px; padding-left: 3px; background: #ffd313; }
.btn-blue { width: 194px; height: 53px; background: #2d73b9; }
.play { width: 11px; height: 12px; margin-right: 19px; margin-top: -7px; }

/* scrollbar */
.scrollbar { flex: none; width: 17px; background: #f0f0f0; display: flex; flex-direction: column; align-items: center; padding: 5px 0; }
.arrow { width: 0; height: 0; border-left: 4px solid transparent; border-right: 4px solid transparent; }
.arrow-up { border-bottom: 5px solid #606060; }
.thumb { width: 13px; height: 88px; margin-top: 7px; background: #bdbdbd; }
.arrow-down { margin-top: auto; border-top: 5px solid #606060; }

/* taskbar */
.taskbar { flex: none; height: 48px; background: #034a2c; display: flex; align-items: center; justify-content: space-between; padding-left: 11px; color: #fff; }
.task-icons { display: flex; }
.task { position: relative; width: 44px; height: 40px; display: flex; align-items: center; justify-content: center; border-radius: 4px; }
.ti { width: 24px; height: 24px; }
.run::after { content: ""; position: absolute; bottom: 3px; left: 20px; width: 4px; height: 3px; border-radius: 2px; background: #aab9b1; }
.active { background: #1a5a3c; }
.active::after { content: ""; position: absolute; bottom: 1px; left: 13px; width: 16px; height: 3px; border-radius: 2px; background: #0fb56c; }
.vpn { background: #41292b; }
.vpn::after { content: ""; position: absolute; bottom: 3px; left: 20px; width: 4px; height: 3px; border-radius: 2px; background: #e8909a; }
.badge { position: absolute; top: 0; right: 1px; min-width: 17px; height: 17px; border-radius: 50%; background: #e8121a; color: #fff; font-size: 12px; line-height: 17px; text-align: center; letter-spacing: -.5px; }
.word-w { font-family: "Liberation Sans", sans-serif; font-size: 9px; font-weight: 700; fill: #fff; text-anchor: middle; }
.tray { display: flex; align-items: center; padding-right: 15px; }
.chevup { width: 13px; height: 8px; margin-right: 16px; }
.lang { font-size: 11px; margin-right: 18px; }
.tray-ic { width: 16px; height: 16px; margin-right: 7px; }
.tray-sound { margin-right: 9px; }
.clock { display: flex; flex-direction: column; align-items: flex-end; font-size: 12px; line-height: 16px; margin-left: 9px; letter-spacing: -.55px; }
```
